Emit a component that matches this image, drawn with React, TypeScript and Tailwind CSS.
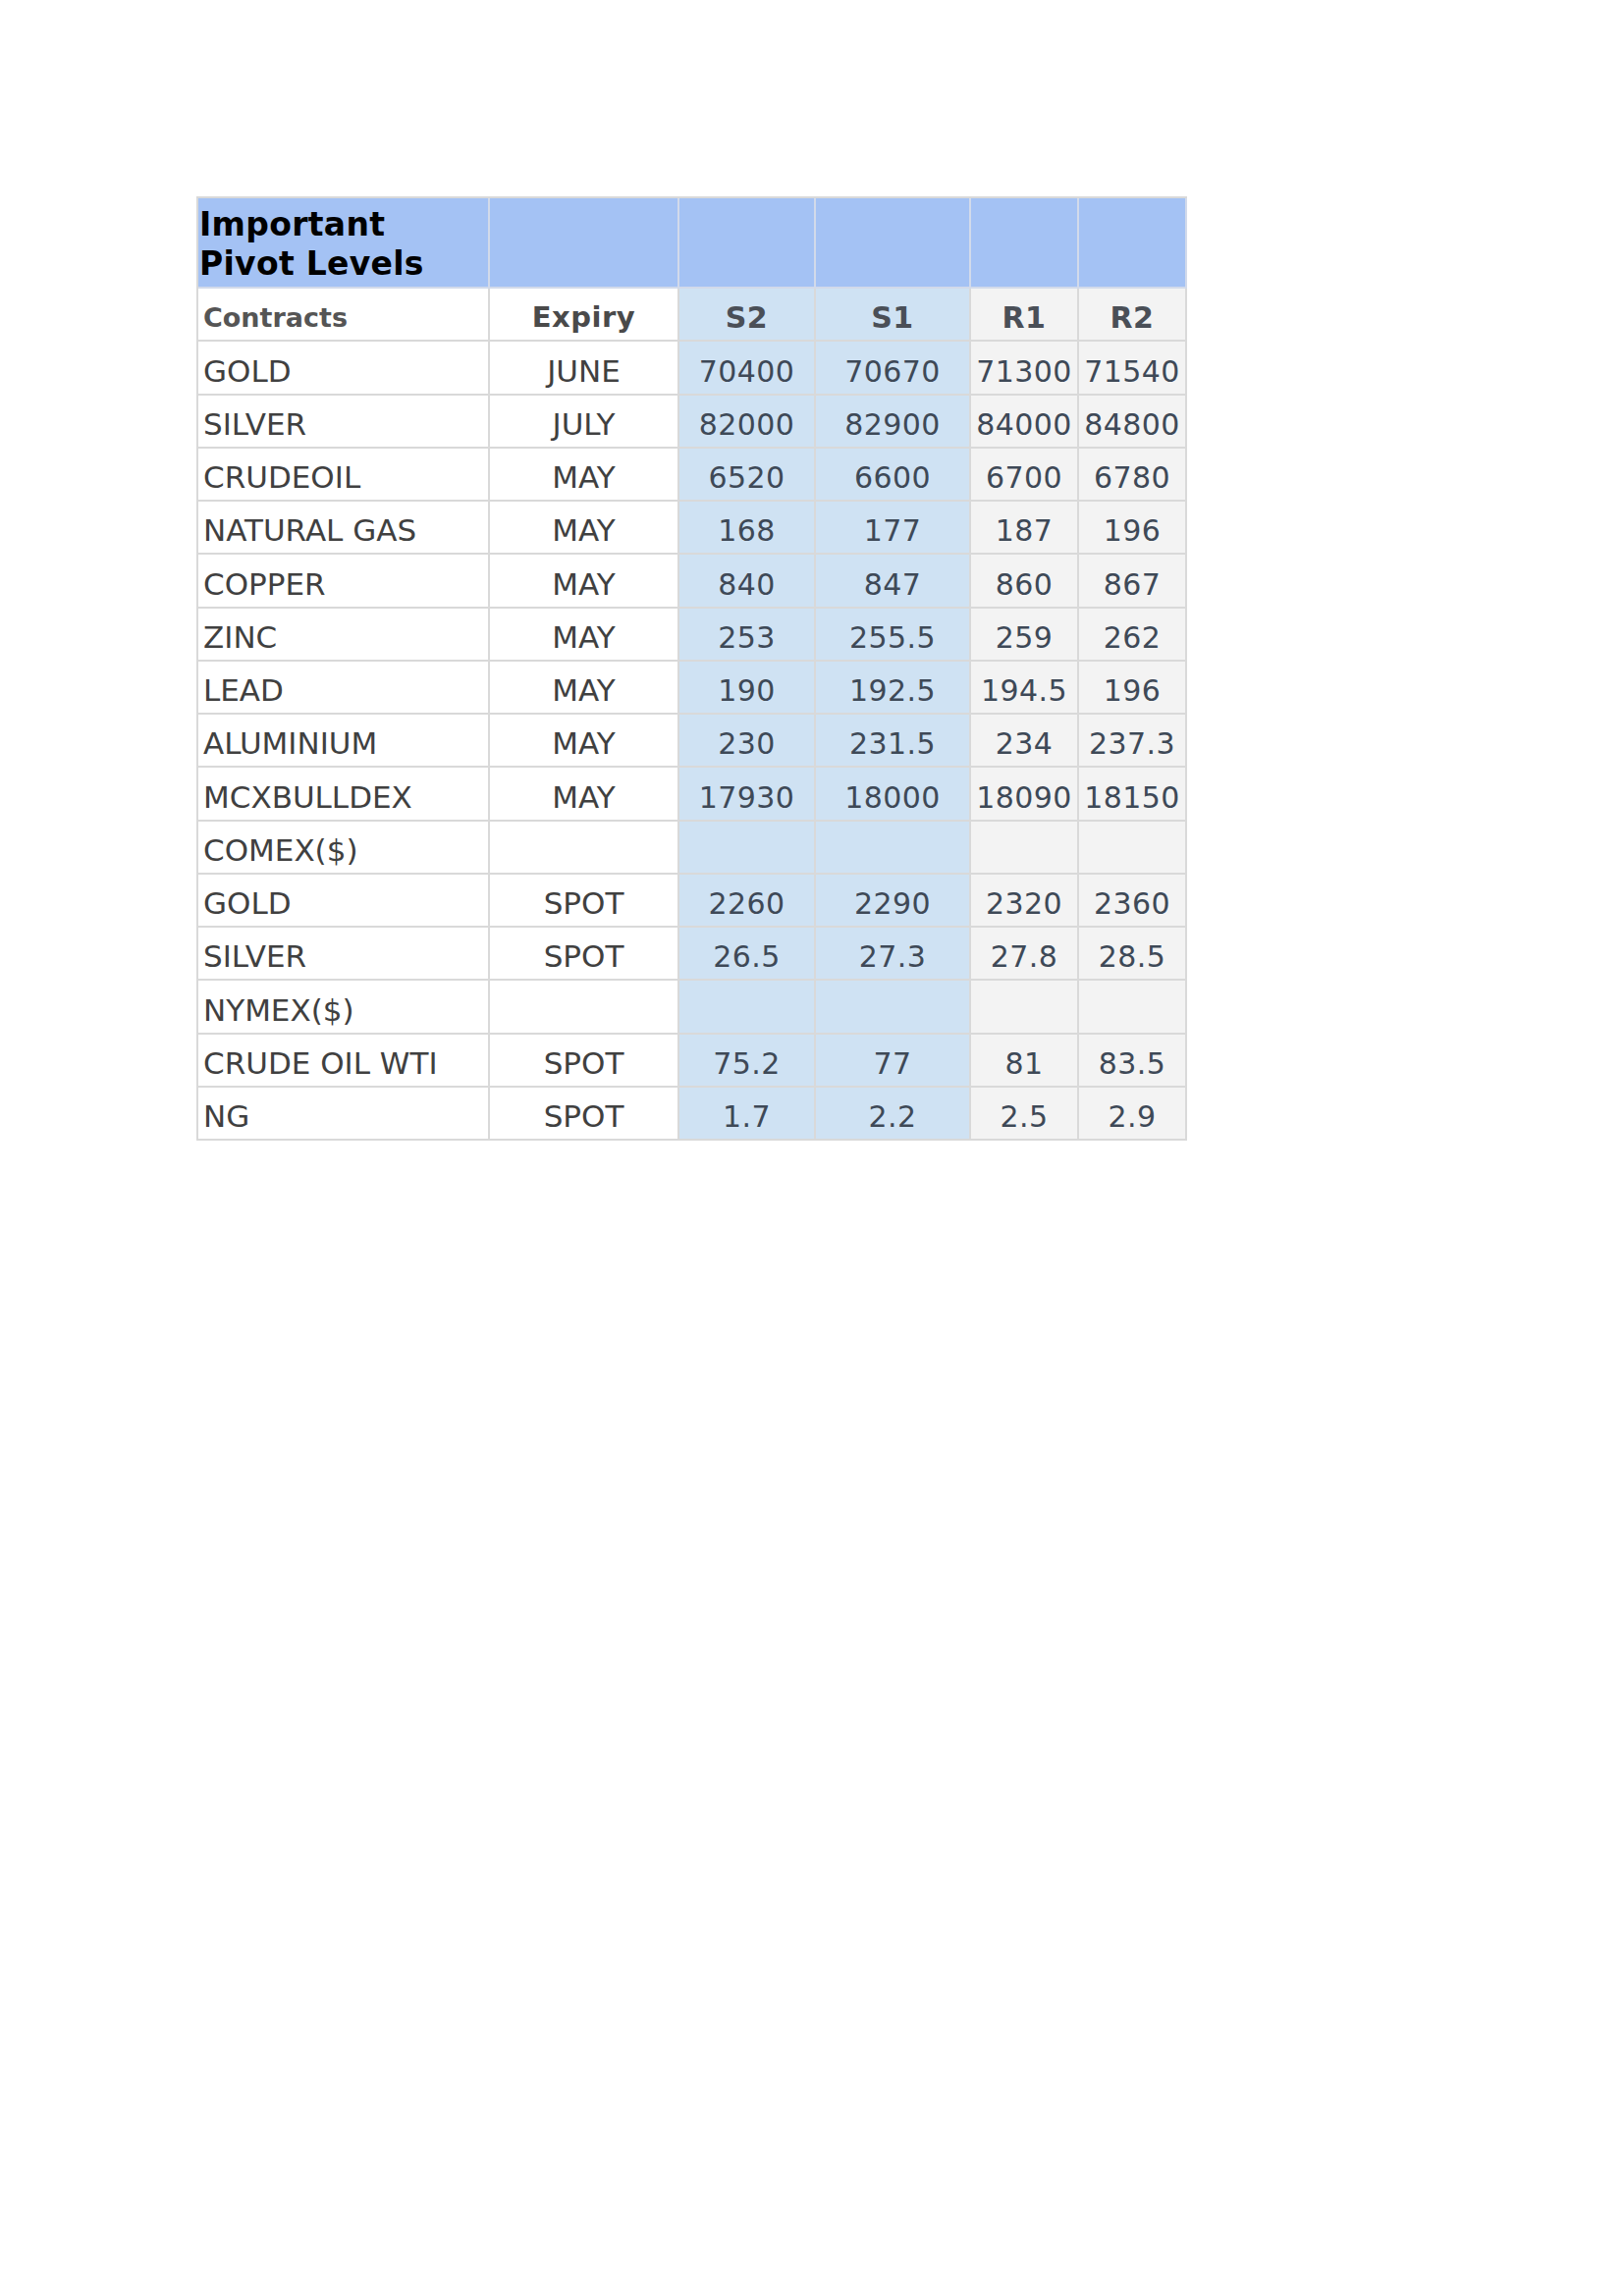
import type React from "react"

type Row = {
  name: string
  expiry: string
  s2: string
  s1: string
  r1: string
  r2: string
}

const rows: Row[] = [
  { name: "GOLD", expiry: "JUNE", s2: "70400", s1: "70670", r1: "71300", r2: "71540" },
  { name: "SILVER", expiry: "JULY", s2: "82000", s1: "82900", r1: "84000", r2: "84800" },
  { name: "CRUDEOIL", expiry: "MAY", s2: "6520", s1: "6600", r1: "6700", r2: "6780" },
  { name: "NATURAL GAS", expiry: "MAY", s2: "168", s1: "177", r1: "187", r2: "196" },
  { name: "COPPER", expiry: "MAY", s2: "840", s1: "847", r1: "860", r2: "867" },
  { name: "ZINC", expiry: "MAY", s2: "253", s1: "255.5", r1: "259", r2: "262" },
  { name: "LEAD", expiry: "MAY", s2: "190", s1: "192.5", r1: "194.5", r2: "196" },
  { name: "ALUMINIUM", expiry: "MAY", s2: "230", s1: "231.5", r1: "234", r2: "237.3" },
  { name: "MCXBULLDEX", expiry: "MAY", s2: "17930", s1: "18000", r1: "18090", r2: "18150" },
  { name: "COMEX($)", expiry: "", s2: "", s1: "", r1: "", r2: "" },
  { name: "GOLD", expiry: "SPOT", s2: "2260", s1: "2290", r1: "2320", r2: "2360" },
  { name: "SILVER", expiry: "SPOT", s2: "26.5", s1: "27.3", r1: "27.8", r2: "28.5" },
  { name: "NYMEX($)", expiry: "", s2: "", s1: "", r1: "", r2: "" },
  { name: "CRUDE OIL WTI", expiry: "SPOT", s2: "75.2", s1: "77", r1: "81", r2: "83.5" },
  { name: "NG", expiry: "SPOT", s2: "1.7", s1: "2.2", r1: "2.5", r2: "2.9" },
]

const cell = "flex items-end h-[54.25px] border-r-2 border-b-2 border-[#d9d9d9] pb-[5px] leading-[35px] whitespace-nowrap"
const sCell = `${cell} justify-center bg-[#cfe2f3] text-[#3e4957] tracking-[0.4px]`
const rCell = `${cell} justify-center bg-[#f3f3f3] text-[#3e4957] tracking-[0.4px]`
const head = "h-[92px] border-r-2 border-b-2 border-[#d2daea] bg-[#a4c2f4]"

const App: React.FC = () => {
  return (
    <div className="min-h-[2339px] w-[1654px] bg-white pt-[200px] pl-[200px] font-['DejaVu_Sans',Verdana,sans-serif] text-[30px]">
      <div className="grid w-fit grid-cols-[297px_193px_139px_158px_110px_110px] border-l-2 border-t-2 border-[#d9d9d9]">
        <div className={`${head} flex items-end pb-[3px] pl-[1px] text-[33px] font-bold leading-[40px] tracking-[0.3px] text-black`}>
          <div>
            Important
            <br />
            Pivot Levels
          </div>
        </div>
        <div className={head} />
        <div className={head} />
        <div className={head} />
        <div className={head} />
        <div className={head} />

        <div className={`${cell} bg-white pl-[5px] text-[27px] font-bold text-[#555555]`}>Contracts</div>
        <div className={`${cell} justify-center bg-white text-[29px] font-bold tracking-[0.5px] text-[#4a4a4a]`}>Expiry</div>
        <div className={`${sCell} font-bold text-[#4a4f57]`}>S2</div>
        <div className={`${sCell} font-bold text-[#4a4f57]`}>S1</div>
        <div className={`${rCell} font-bold text-[#4a4f57]`}>R1</div>
        <div className={`${rCell} font-bold text-[#4a4f57]`}>R2</div>

        {rows.map((r, i) => (
          <div key={i} className="contents">
            <div className={`${cell} bg-white pl-[5px] text-[31px] text-[#404040]`}>{r.name}</div>
            <div className={`${cell} justify-center bg-white text-[31px] text-[#404040]`}>{r.expiry}</div>
            <div className={sCell}>{r.s2}</div>
            <div className={sCell}>{r.s1}</div>
            <div className={rCell}>{r.r1}</div>
            <div className={rCell}>{r.r2}</div>
          </div>
        ))}
      </div>
    </div>
  )
}

export default App
